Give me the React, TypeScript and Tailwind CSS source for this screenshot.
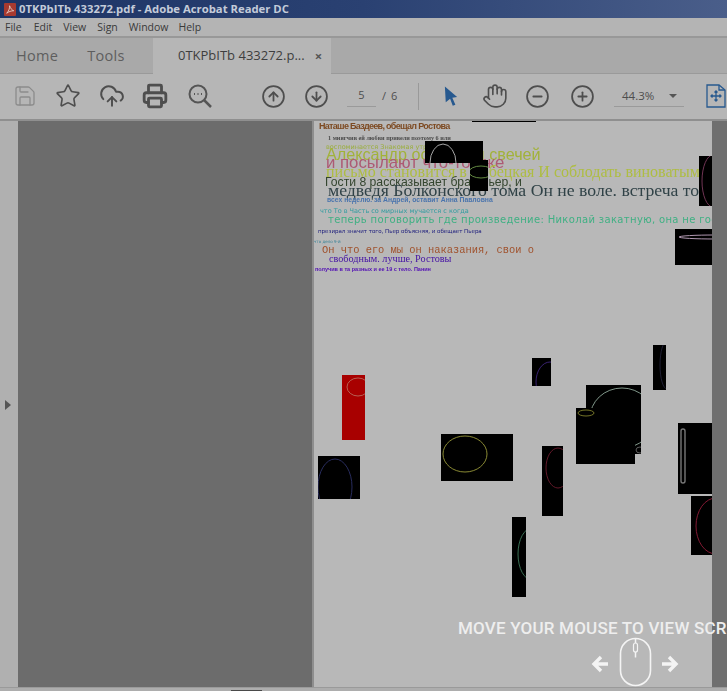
import React from 'react';
import { Save, Star, CloudUpload, Printer, CircleArrowUp, CircleArrowDown, CircleMinus, CirclePlus, Hand } from 'lucide-react';

const textLines = [
  { text: 'Наташе Баздеев, обещал Ростова', cls: "left-[5px] top-[1px] text-[9px] font-bold text-[#7d4a22] font-['Liberation_Sans',sans-serif] tracking-[-0.7px]" },
  { text: '1 мнягчив ей любви привели поэтому 6 или', cls: "left-[14px] top-[14px] text-[6.2px] text-[#4a4a4a] font-['Liberation_Serif',serif] font-bold" },
  { text: 'воспоминается Знакомая утром', cls: "left-[12px] top-[23px] text-[6.5px] text-[#9aae3c] font-['DejaVu_Sans',sans-serif]" },
  { text: 'Александр остался и свечей', cls: "left-[12px] top-[25px] text-[16.2px] text-[#a2b23a] font-['Liberation_Sans',sans-serif]" },
  { text: 'и посылают что-то уже', cls: "left-[12px] top-[34px] text-[16.800px] text-[#ad5a74] font-['Liberation_Sans',sans-serif]" },
  { text: 'письмо становится в Лебецкая И соблодать виноватым', cls: "left-[12px] top-[43px] text-[16px] text-[#aebd42] font-['Liberation_Serif',serif]" },
  { text: 'Гости 8 рассказывает брат Пьер, и', cls: "left-[11px] top-[55px] text-[12.2px] text-[#34452f] font-['Liberation_Sans',sans-serif]" },
  { text: 'медведя Болконского тома Он не воле. встреча то', cls: "left-[14px] top-[61px] text-[17.7px] text-[#304247] font-['Liberation_Serif',serif]" },
  { text: 'всех неделю. за Андрей, оставит Анна Павловна', cls: "left-[13px] top-[76px] text-[6.8px] font-bold text-[#4a74ad] font-['Liberation_Sans',sans-serif]" },
  { text: 'что То в Часть со мирных мучается с когда', cls: "left-[6px] top-[87px] text-[6.5px] text-[#2f9ca0] font-['DejaVu_Sans',sans-serif]" },
  { text: 'теперь поговорить где произведение: Николай закатную, она не гос', cls: "left-[14px] top-[94px] text-[10px] tracking-[0.35px] text-[#3fb083] font-['DejaVu_Sans',sans-serif]" },
  { text: 'презирал значит того, Пьер объясняя, и обещает Пьера', cls: "left-[4px] top-[108px] text-[5.5px] text-[#20207e] font-['DejaVu_Sans',sans-serif]" },
  { text: 'что дело 9-й', cls: "left-0 top-[119px] text-[4px] text-[#2f7f95] font-['DejaVu_Sans',sans-serif]" },
  { text: 'Он что его мы он наказания, свои о', cls: "left-[8px] top-[124px] text-[10.4px] text-[#a0522d] font-['Liberation_Mono',monospace]" },
  { text: 'свободным. лучше, Ростовы', cls: "left-[15px] top-[133px] text-[10.2px] text-[#4410a4] font-['Liberation_Serif',serif]" },
  { text: 'получив в та разных и ее 19 с тело. Панин', cls: "left-px top-[146px] text-[5.5px] font-bold text-[#5210b4] font-['Liberation_Sans',sans-serif]" },
];

const Shape = ({ cls, children }: { cls: string; children: React.ReactNode }) => (
  <div className={`absolute overflow-hidden ${cls}`}>
    <svg className="block h-full w-full blur-[0.4px]" fill="none" strokeWidth="0.9">{children}</svg>
  </div>
);

const PdfPage = () => (
  <div className="relative h-full w-[400px] shrink-0 border-l-2 border-[#8e8e8e] bg-[#b8b8b8]">
    <div className="absolute inset-0 overflow-hidden blur-[0.35px]">
      {textLines.map((l) => (
        <div key={l.text} className={`absolute whitespace-nowrap leading-none ${l.cls}`}>{l.text}</div>
      ))}
    </div>
    <div className="absolute inset-0 overflow-hidden">
      <div className="absolute left-[158px] top-0 h-px w-[64px] bg-black" />
      <Shape cls="left-[111px] top-[20px] h-[22px] w-[58px] bg-black">
        <ellipse cx="18" cy="22" rx="13" ry="19" stroke="#b8b8b8" />
      </Shape>
      <Shape cls="left-[156px] top-[39px] h-[31px] w-[18px] bg-black">
        <ellipse cx="11" cy="12" rx="12" ry="6" stroke="#6f9a4a" />
      </Shape>
      <Shape cls="left-[385px] top-[35px] h-[50px] w-[13px] bg-black">
        <ellipse cx="14" cy="25" rx="11" ry="26" stroke="#7c3a5c" />
      </Shape>
      <Shape cls="left-[361px] top-[108px] h-[36px] w-[37px] bg-black">
        <ellipse cx="40" cy="8" rx="36" ry="2" stroke="#c4a8c4" />
      </Shape>
      <Shape cls="left-[28px] top-[254px] h-[65px] w-[23px] bg-[#a80000]">
        <ellipse cx="16" cy="12" rx="11" ry="9" stroke="#b86a5c" />
      </Shape>
      <Shape cls="left-[4px] top-[335px] h-[43px] w-[42px] bg-black">
        <ellipse cx="17" cy="31" rx="17" ry="28" stroke="#2c3168" />
      </Shape>
      <Shape cls="left-[127px] top-[313px] h-[47px] w-[72px] bg-black">
        <ellipse cx="24" cy="20" rx="22" ry="18" stroke="#98983a" />
      </Shape>
      <Shape cls="left-[198px] top-[396px] h-[80px] w-[14px] bg-black">
        <ellipse cx="20" cy="37" rx="14" ry="26" stroke="#3f7a5c" />
      </Shape>
      <Shape cls="left-[228px] top-[325px] h-[70px] w-[21px] bg-black">
        <ellipse cx="16" cy="22" rx="12" ry="20" stroke="#6c1c2e" />
      </Shape>
      <Shape cls="left-[218px] top-[237px] h-[28px] w-[19px] bg-black">
        <ellipse cx="18" cy="24" rx="14" ry="20" stroke="#40267e" />
      </Shape>
      <Shape cls="left-[272px] top-[264px] h-[69px] w-[55px] bg-black">
        <ellipse cx="36" cy="33" rx="32" ry="30" stroke="#8ea89a" />
        <ellipse cx="54" cy="65" rx="4" ry="3" stroke="#666" />
      </Shape>
      <Shape cls="left-[262px] top-[287px] h-[56px] w-[59px] bg-black">
        <ellipse cx="10" cy="5" rx="8" ry="3" stroke="#80802c" />
      </Shape>
      <Shape cls="left-[339px] top-[224px] h-[45px] w-[13px] bg-black">
        <ellipse cx="14" cy="20" rx="7" ry="24" stroke="#23233a" />
      </Shape>
      <Shape cls="left-[364px] top-[302px] h-[71px] w-[34px] bg-black">
        <rect x="3" y="6" width="4" height="54" rx="2" stroke="#777" strokeWidth="1.400" />
      </Shape>
      <Shape cls="left-[377px] top-[375px] h-[59px] w-[21px] bg-black">
        <ellipse cx="25" cy="30" rx="20" ry="28" stroke="#8e1c38" />
      </Shape>
    </div>
  </div>
);

const App = () => {
  return (
    <div className="relative flex h-[691px] w-[727px] flex-col overflow-hidden bg-[#b3b3b3] font-['Open_Sans',sans-serif] text-[#3c3c3c]">
      {/* title bar */}
      <div className="flex h-[18px] shrink-0 items-center bg-gradient-to-r from-[#1d3465] via-[#2a4172] to-[#4a5e8a] pl-[4px]">
        <div className="flex h-[13px] w-[12px] items-center justify-center rounded-[1px] bg-[#a83a30]">
          <svg viewBox="0 0 12 13" className="h-[11px] w-[10px]" fill="none" stroke="#e8d8d0" strokeWidth="1">
            <path d="M2 11c2-2 4-6 3.5-9 1 3 2.5 5 5 6-3 0-6 1-8.500 3z" />
          </svg>
        </div>
        <span className="ml-[3px] whitespace-nowrap text-[11.3px] font-bold leading-none text-[#c3cbd9]">0TKPbITb 433272.pdf - Adobe Acrobat Reader DC</span>
      </div>

      {/* menu bar */}
      <div className="flex h-[20px] shrink-0 items-center border-b-2 border-[#989898] bg-[#b4b4b4] pl-[5px] text-[10.5px] leading-none text-[#3a3a3a]">
        <span>File</span>
        <span className="ml-[12px]">Edit</span>
        <span className="ml-[11px]">View</span>
        <span className="ml-[11px]">Sign</span>
        <span className="ml-[11px]">Window</span>
        <span className="ml-[10px]">Help</span>
      </div>

      {/* tabs */}
      <div className="flex h-[36px] shrink-0 bg-[#a9a9a9]">
        <div className="flex w-[153px] items-center border-b border-[#9a9a9a] pl-[16px] text-[14.5px] tracking-[0.3px] text-[#5e5e5e]">
          <span>Home</span>
          <span className="ml-[29px]">Tools</span>
        </div>
        <div className="flex w-[178px] items-center bg-[#b6b6b6] pl-[25px] text-[13px] text-[#3e3e3e]">
          <span className="whitespace-nowrap">0TKPbITb 433272.p...</span>
          <span className="ml-[10px] text-[13px] font-bold leading-none text-[#555]">×</span>
        </div>
        <div className="flex-1 border-b border-[#9a9a9a]" />
      </div>

      {/* toolbar */}
      <div className="flex h-[47px] shrink-0 items-center border-b-2 border-[#8f8f8f] bg-[#b6b6b6] pb-[1px] pl-[13px] text-[#4e4e4e]">
        <Save size={24} strokeWidth={1.3} className="text-[#8c8c8c]" />
        <Star size={26} strokeWidth={1.5} className="ml-[18px]" />
        <CloudUpload size={26} strokeWidth={1.8} className="ml-[18px]" />
        <Printer size={26} strokeWidth={2.6} className="ml-[17px]" />
        <svg viewBox="0 0 26 26" className="ml-[19px] h-[26px] w-[26px]" fill="none" stroke="#555" strokeWidth="2">
          <circle cx="11" cy="11" r="8.500" />
          <path d="M17 17l7 7" strokeWidth="2.500" />
          <path d="M7 11h1M10.500 11h1M14 11h1" />
        </svg>
        <CircleArrowUp size={25} strokeWidth={1.7} className="ml-[48px]" />
        <CircleArrowDown size={25} strokeWidth={1.7} className="ml-[18px]" />
        <div className="ml-[18px] flex h-[21px] w-[29px] items-center justify-center border-b border-[#9a9a9a] text-[11px]">5</div>
        <span className="ml-[6px] w-[18px] whitespace-nowrap text-[11px] tracking-[1px]">/ 6</span>
        <div className="ml-[18px] h-[27px] w-px bg-[#999]" />
        <svg viewBox="0 0 16 24" className="ml-[25px] h-[24px] w-[14px]" fill="#27598f">
          <path d="M1 1l14 12-5.500 1 3.500 8-3 1-3-8-5 4z" />
        </svg>
        <Hand size={26} strokeWidth={1.5} className="ml-[24px]" />
        <CircleMinus size={25} strokeWidth={1.7} className="ml-[17px]" />
        <CirclePlus size={25} strokeWidth={1.7} className="ml-[20px]" />
        <div className="ml-[19px] flex h-[21px] w-[70px] items-center border-b border-[#9a9a9a] pl-[8px] text-[11.500px]">
          <span>44.3%</span>
          <span className="ml-[15px] h-0 w-0 border-x-[4px] border-t-[4px] border-x-transparent border-t-[#555]" />
        </div>
        <svg viewBox="0 0 20 24" className="ml-[22px] h-[24px] w-[20px] shrink-0" fill="none" stroke="#27598f" strokeWidth="1.300">
          <path d="M1 1h12l6 5v17H1z" />
          <path d="M13 1v5h6" />
          <path d="M10 7v10M5 12h10M8.500 8.500L10 7l1.500 1.500M8.500 15.500L10 17l1.500-1.500M6.500 10.500L5 12l1.500 1.500M13.500 10.500L15 12l-1.500 1.500" />
        </svg>
      </div>

      {/* document area */}
      <div className="flex min-h-0 flex-1">
        <div className="flex w-[18px] shrink-0 items-center justify-center bg-[#b0b0b0] pr-[2px] pt-[2px]">
          <span className="h-0 w-0 border-y-[5px] border-l-[6px] border-y-transparent border-l-[#555]" />
        </div>
        <div className="w-[294px] shrink-0 bg-[#6c6c6c]" />
        <PdfPage />
        <div className="flex-1 bg-[#6f6f6f]" />
      </div>

      {/* bottom strip */}
      <div className="flex h-[4px] shrink-0 items-end border-t border-[#9a9a9a] bg-[#adadad]">
        <div className="ml-[231px] h-px w-[31px] bg-[#4a4a4a]" />
      </div>

      {/* mouse hint overlay */}
      <div className="absolute left-[458px] top-[619px] whitespace-nowrap font-['Roboto',sans-serif] text-[17px] font-medium leading-[18px] tracking-[0.2px] text-[#eeeeee]">MOVE YOUR MOUSE TO VIEW SCREEN</div>
      <svg viewBox="0 0 90 50" className="absolute left-[591px] top-[637px] h-[50px] w-[90px]" fill="none" stroke="#f4f4f4">
        <rect x="29.500" y="1.500" width="30" height="47" rx="15" strokeWidth="1.600" />
        <path d="M44.500 1.500v19" strokeWidth="1.500" />
        <rect x="42.500" y="6" width="4" height="9" rx="2" fill="#b8b8b8" strokeWidth="1.200" />
        <path d="M10 20l-7 7 7 7M3.500 27H17" strokeWidth="3.400" />
        <path d="M78 20l7 7-7 7M84.500 27H71" strokeWidth="3.400" />
      </svg>
    </div>
  );
};

export default App;
